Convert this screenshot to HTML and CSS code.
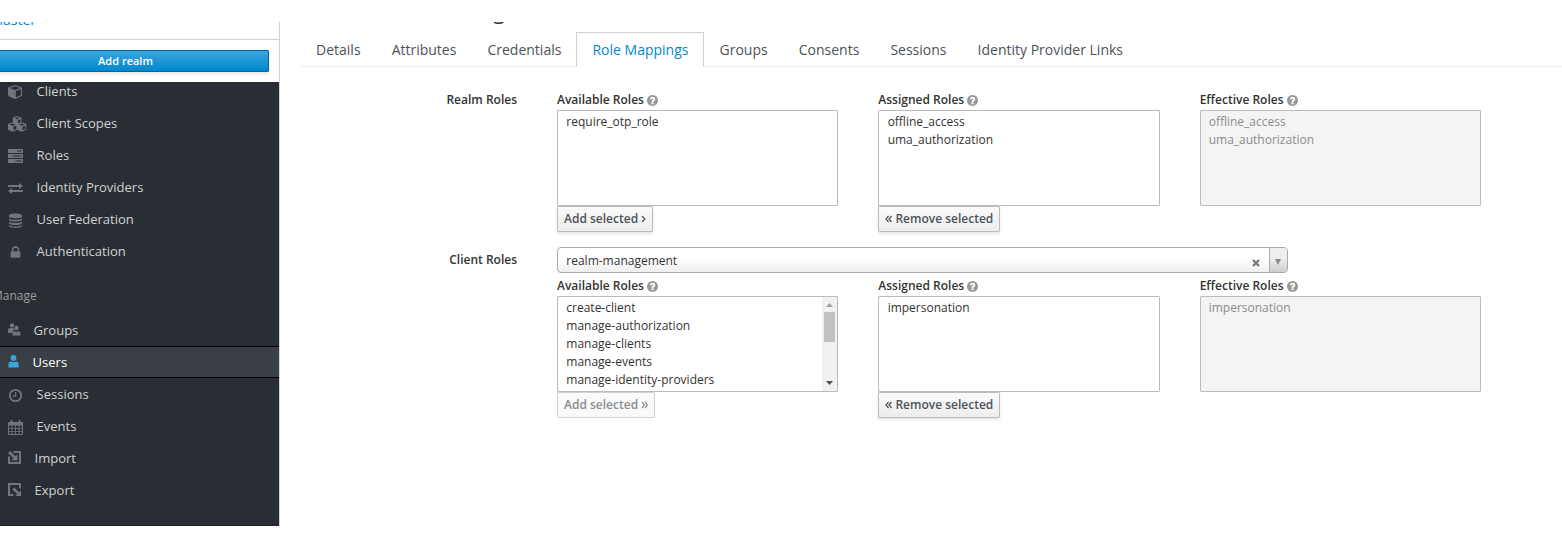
FILE: index.html
```html
<!DOCTYPE html>
<html lang="en">
<head>
<meta charset="utf-8">
<title>Role Mappings</title>
<link rel="stylesheet" href="styles.css">
</head>
<body>
<svg class="defs" width="0" height="0" aria-hidden="true">
  <symbol id="help" viewBox="128 128 1536 1536"><path d="M1024 1376v-192q0-14-9-23t-23-9h-192q-14 0-23 9t-9 23v192q0 14 9 23t23 9h192q14 0 23-9t9-23zm256-672q0-88-55.500-163t-138.500-116-170-41q-243 0-371 213-15 24 8 42l132 100q7 6 19 6 16 0 25-12 53-68 86-92 34-24 86-24 48 0 85.500 26t37.500 59q0 38-20 61t-68 45q-63 28-115.500 86.500t-52.500 125.500v36q0 14 9 23t23 9h192q14 0 23-9t9-23q0-19 21.500-49.500t54.500-49.500q32-18 49-28.500t46-35 44.500-48 28-60.500 12.500-81zm384 192q0 209-103 385.500t-279.500 279.500-385.500 103-385.500-103-279.500-279.500-103-385.500 103-385.500 279.500-279.500 385.500-103 385.500 103 279.500 279.500 103 385.500z"/></symbol>
  <symbol id="cube" viewBox="0 0 14 14"><path fill-rule="evenodd" d="M7 0 L13.400 2.300 Q14 2.600 14 3.200 V10.200 Q14 10.800 13.500 11.100 L7.500 13.900 Q7 14.100 6.500 13.900 L.5 11.100 Q0 10.800 0 10.200 V3.200 Q0 2.600 .6 2.300 Z M7 1.200 L1.700 3.100 L7 5.100 L12.300 3.100 Z M7.800 6.100 V12.500 L12.900 10.200 V4.200 Z"/></symbol>
  <symbol id="cube-small" viewBox="0 0 14 14"><path fill-rule="evenodd" d="M7 0 L13 2.300 Q14 2.600 14 3.500 V10 Q14 10.800 13.500 11.100 L7.500 13.900 Q7 14.100 6.500 13.900 L.5 11.100 Q0 10.800 0 10 V3.500 Q0 2.600 1 2.300 Z M7 1.800 L3 3.400 L7 5 L11 3.400 Z M8.200 6.800 V11.800 L12.300 9.900 V5.200 Z"/></symbol>
</svg>
<div class="window">
  <aside class="sidebar">
    <div class="realm"><span>Master</span></div>
    <div class="realm-add"><button class="primary">Add realm</button></div>
    <nav class="nav">
      <a class="item first"><svg class="icon" width="15" height="15"><use href="#cube" width="14" height="14"/></svg>Clients</a>
      <a class="item"><svg class="icon" width="19" height="16"><use href="#cube-small" x="4.300" y="0" width="9.600" height="9"/><use href="#cube-small" x="-.2" y="6.200" width="9.600" height="9.600"/><use href="#cube-small" x="8.900" y="6.200" width="9.600" height="9.600"/></svg>Client Scopes</a>
      <a class="item"><svg class="icon" width="15" height="14"><path fill-rule="evenodd" d="M0 0h15v4H0zM0 5h15v4H0zM0 10h15v4H0zM9 1.500h4.500v1H9zM4.500 6.500h9v1h-9zM7.500 11.500h6v1h-6z"/></svg>Roles</a>
      <a class="item"><svg class="icon" width="15" height="14"><path d="M0 4h11V2l4 3-4 3V6H0zM15 9H4V7L0 10l4 3v-2h11z"/></svg>Identity Providers</a>
      <a class="item"><svg class="icon" width="15" height="15"><path d="M1 2.500C1-.2 14-.2 14 2.500v1C14 6 1 6 1 3.500zM1 5.200c2 2 11 2 13 0v1.600c0 2.400-13 2.400-13 0zM1 8.600c2 2 11 2 13 0v1.600c0 2.400-13 2.400-13 0zM1 11.900c2 2 11 2 13 0v1.200c0 2.500-13 2.500-13 0z"/></svg>User Federation</a>
      <a class="item"><svg class="icon" width="15" height="15" viewBox="0 0 1792 1792"><path d="M640 768h512v-192q0-106-75-181t-181-75-181 75-75 181v192zm832 96v576q0 40-28 68t-68 28h-960q-40 0-68-28t-28-68v-576q0-40 28-68t68-28h32v-192q0-184 132-316t316-132 316 132 132 316v192h32q40 0 68 28t28 68z"/></svg>Authentication</a>
      <h2 class="section"><span>Manage</span></h2>
      <a class="item pf w12"><svg class="icon" width="13" height="13"><circle cx="4" cy="2.400" r="2.200"/><path d="M0 10V7q0-2 2-2h3.500l.5 2-2 3z"/><circle cx="8.500" cy="5" r="2.200"/><path d="M4.500 12.500v-2q0-2.300 2-2.600l2 1.400 2-1.400q2 .3 2 2.600v2z"/></svg>Groups</a>
      <a class="item pf w11 active"><svg class="icon" width="11" height="13"><circle cx="5.500" cy="3" r="2.900"/><path d="M.4 12.500V9.200q0-2.500 2.500-2.700 2.600 1.100 5.200 0 2.500.2 2.500 2.700v3.300z"/></svg>Users</a>
      <a class="item"><svg class="icon" width="15" height="15"><circle class="ring" cx="7.500" cy="7.500" r="5.700"/><path d="M7 4h1.300v4.700H4.500V7.400H7z"/></svg>Sessions</a>
      <a class="item"><svg class="icon" width="15" height="15"><path fill-rule="evenodd" d="M1 2h1.500V.8q0-.8 1-.8t1 .8V2h6V.8q0-.8 1-.8t1 .8V2H14q1 0 1 1v11q0 1-1 1H1q-1 0-1-1V3q0-1 1-1zM1 5.500V8h2.500V5.500zm3.300 0V8h2.800V5.500zm3.600 0V8h2.800V5.500zm3.600 0V8H14V5.500zM1 8.700v2.300h2.500V8.700zm3.300 0v2.300h2.800V8.700zm3.600 0v2.300h2.800V8.700zm3.600 0v2.300H14V8.700zM1 11.700V14h2.500v-2.300zm3.300 0V14h2.800v-2.300zm3.600 0V14h2.800v-2.300zm3.600 0V14H14v-2.300z"/></svg>Events</a>
      <a class="item pf w13"><svg class="icon" width="13" height="13"><path d="M0 5.500h2V11h9V2H5.500V0H13v13H0zM0 2 2 0l5.700 5.200L9.500 3.400V9.500H3.400L5.500 7.300z"/></svg>Import</a>
      <a class="item pf w13"><svg class="icon" width="13" height="13"><path d="M0 0h13v5.500h-2V2H2v9h3.500v2H0zM4.300 6.500 6.300 4.500l4.700 4.700 2-2V13H7.200l2-2z"/></svg>Export</a>
    </nav>
  </aside>
  <main class="main">
    <h1 class="title"><span>g</span></h1>
    <ul class="tabs">
      <li class="tab">Details</li><li class="tab">Attributes</li><li class="tab">Credentials</li><li class="tab current">Role Mappings</li><li class="tab">Groups</li><li class="tab">Consents</li><li class="tab">Sessions</li><li class="tab">Identity Provider Links</li>
    </ul>
    <section class="row realm-row">
      <div class="row-label">Realm Roles</div>
      <div class="columns">
        <div class="column">
          <div class="label">Available Roles <svg class="help"><use href="#help"/></svg></div>
          <div class="list"><div>require_otp_role</div></div>
          <button class="btn">Add selected <svg class="chev" width="5" height="8"><path d="m1 1 3 3-3 3"/></svg></button>
        </div>
        <div class="column">
          <div class="label">Assigned Roles <svg class="help"><use href="#help"/></svg></div>
          <div class="list"><div>offline_access</div><div>uma_authorization</div></div>
          <button class="btn"><svg class="chev" width="7" height="8"><path d="M3.500 1 1 4l2.500 3M6.500 1 4 4l2.500 3"/></svg> Remove selected</button>
        </div>
        <div class="column">
          <div class="label">Effective Roles <svg class="help"><use href="#help"/></svg></div>
          <div class="list disabled"><div>offline_access</div><div>uma_authorization</div></div>
        </div>
      </div>
    </section>
    <section class="row client-row">
      <div class="row-label client-label">Client Roles</div>
      <div class="columns">
        <div class="select">
          <span class="value">realm-management</span>
          <svg class="clear" width="8" height="8"><path d="m1 1 6 6M7 1 1 7"/></svg>
          <span class="drop"><svg width="6" height="6"><path d="M0 0h6L3 6z"/></svg></span>
        </div>
        <div class="column">
          <div class="label">Available Roles <svg class="help"><use href="#help"/></svg></div>
          <div class="list scroll">
            <div class="options"><div>create-client</div><div>manage-authorization</div><div>manage-clients</div><div>manage-events</div><div>manage-identity-providers</div></div>
            <div class="scrollbar"><svg width="7" height="4"><path class="up" d="M0 4 3.500 0 7 4z"/></svg><span class="thumb"></span><svg class="bottom" width="7" height="4"><path d="M0 0h7L3.500 4z"/></svg></div>
          </div>
          <button class="btn off" disabled>Add selected <svg class="chev" width="7" height="8"><path d="m1 1 2.500 3L1 7M4 1l2.500 3L4 7"/></svg></button>
        </div>
        <div class="column">
          <div class="label">Assigned Roles <svg class="help"><use href="#help"/></svg></div>
          <div class="list"><div>impersonation</div></div>
          <button class="btn"><svg class="chev" width="7" height="8"><path d="M3.500 1 1 4l2.500 3M6.500 1 4 4l2.500 3"/></svg> Remove selected</button>
        </div>
        <div class="column">
          <div class="label">Effective Roles <svg class="help"><use href="#help"/></svg></div>
          <div class="list disabled"><div>impersonation</div></div>
        </div>
      </div>
    </section>
  </main>
</div>
</body>
</html>
```

FILE: styles.css
```css
* { box-sizing: border-box; }
body { margin: 0; padding-top: 22px; height: 548px; overflow: hidden; background: #fff; color: #333; font: 12px/18px "Open Sans", sans-serif; }
.defs { position: absolute; }
.window { display: flex; height: 504px; overflow: hidden; }
.sidebar { width: 280px; flex: none; border-right: 1px solid #d1d1d1; display: flex; flex-direction: column; }
.realm { height: 18px; border-bottom: 1px solid #d1d1d1; overflow: hidden; color: #0088ce; font-size: 14px; line-height: 20px; display: flex; justify-content: flex-end; width: 100%; padding-right: 243px; }
.realm span { margin-top: -12px; }
.realm-add { height: 42px; padding: 10px 10px 0 0; }
.primary { display: block; width: calc(100% + 18px); height: 22px; margin-left: -18px; padding: 0; border: 1px solid #00659c; border-radius: 1px; background: linear-gradient(#39a5dc, #0088ce); color: #fff; font: 600 11px/20px "Open Sans", sans-serif; box-shadow: 0 2px 3px rgba(3,3,3,.1); }
.nav { flex: 1; background: #292e34; overflow: hidden; border-bottom: 1px solid #202329; }
.item { display: flex; align-items: center; height: 32px; padding-left: 8px; color: #d1d1d1; font-size: 13px; line-height: 20px; }
.first { margin-top: -7px; }
.icon { width: 19px; margin-right: 9.600px; flex: none; overflow: visible; fill: #72767b; transform: translateY(1px); }
.icon[viewBox] { width: 15px; margin-right: 13.600px; }
.pf .icon { transform: translateY(-1px); }
.w12 .icon { width: 12px; margin-right: 13.600px; }
.w11 .icon { width: 11px; margin-right: 13.600px; }
.w13 .icon { width: 13px; margin-right: 13.600px; }
.ring { fill: none; stroke: #72767b; stroke-width: 1.8; }
.active { color: #fff; background: #393f44; border-top: 1px solid #030303; border-bottom: 1px solid #030303; }
.active .icon { fill: #39a5dc; }
.section { height: 47px; margin: 0; padding-top: 19px; color: #9c9c9c; font-size: 12px; line-height: 20px; font-weight: 400; }
.section span { display: block; margin-left: -8px; }
.main { flex: 1; min-width: 0; padding-left: 20px; }
.title { height: 10px; margin: 0; overflow: hidden; padding-left: 193px; font-size: 22px; line-height: 24px; font-weight: 400; }
.title span { display: block; margin-top: -24px; }
.tabs { display: flex; list-style: none; margin: 0; padding: 0; height: 35px; border-bottom: 1px solid #ededec; }
.tab { height: 35px; padding: 5px 15.040px 0; border: 1px solid transparent; border-bottom: 0; font-size: 14px; line-height: 24px; color: #4d5258; white-space: nowrap; }
.tab + .tab { margin-left: -1px; }
.current { color: #0088ce; border-color: #d1d1d1; background: #fff; }
.row { display: grid; grid-template-columns: 217px 924px; column-gap: 40px; }
.realm-row { padding-top: 23px; }
.client-row { padding-top: 15px; }
.row-label { text-align: right; font-weight: 600; line-height: 20px; }
.client-label { padding-top: 3px; }
.columns { display: grid; grid-template-columns: repeat(3, 1fr); column-gap: 40px; align-items: start; }
.label { height: 20px; font-weight: 600; line-height: 20px; }
.help { width: 11px; height: 11px; fill: #999; vertical-align: -1.500px; }
.list { height: 96px; border: 1px solid #bbb; border-radius: 1px; padding: 2px 8px 2px 8.300px; line-height: 18px; }
.disabled { background: #f4f4f4; color: #8b8d8f; padding-left: 8px; }
.btn { display: block; height: 26px; padding: 0 6px; border: 1px solid #bbb; border-radius: 1px; background: linear-gradient(#fafafa, #ededed); color: #4d5258; font: 600 12px/22px "Open Sans", sans-serif; box-shadow: 0 2px 3px rgba(3,3,3,.1); white-space: nowrap; }
.chev { fill: none; stroke: currentColor; stroke-width: 1.2; }
.off { color: #8b8d8f; background: #fafafa; border-color: #d1d1d1; box-shadow: none; }
.select { grid-column: 1 / -1; width: 731px; height: 26px; margin-bottom: 3px; display: flex; align-items: center; border: 1px solid #aaa; border-radius: 4px; overflow: hidden; background: linear-gradient(#fff 50%, #eee); }
.value { flex: 1; padding: 2px 0 0 8.300px; }
.clear { margin: 6px 9px 0 0; fill: none; stroke: #777; stroke-width: 2.200; }
.drop { width: 18px; height: 24px; border-left: 1px solid #aaa; background: linear-gradient(#eee 40%, #ccc); display: flex; align-items: center; justify-content: center; }
.drop svg { fill: #888; margin: 4px 1px 0 0; }
.scroll { display: flex; padding: 0; overflow: hidden; }
.options { flex: 1; padding: 2px 8px 2px 8.300px; }
.scrollbar { width: 15px; background: #f1f1f1; display: flex; flex-direction: column; align-items: center; padding: 6px 0; fill: #505050; }
.up { fill: #a3a3a3; }
.thumb { width: 11px; height: 30px; margin-top: 5px; background: #c1c1c1; }
.bottom { margin-top: auto; }
```
